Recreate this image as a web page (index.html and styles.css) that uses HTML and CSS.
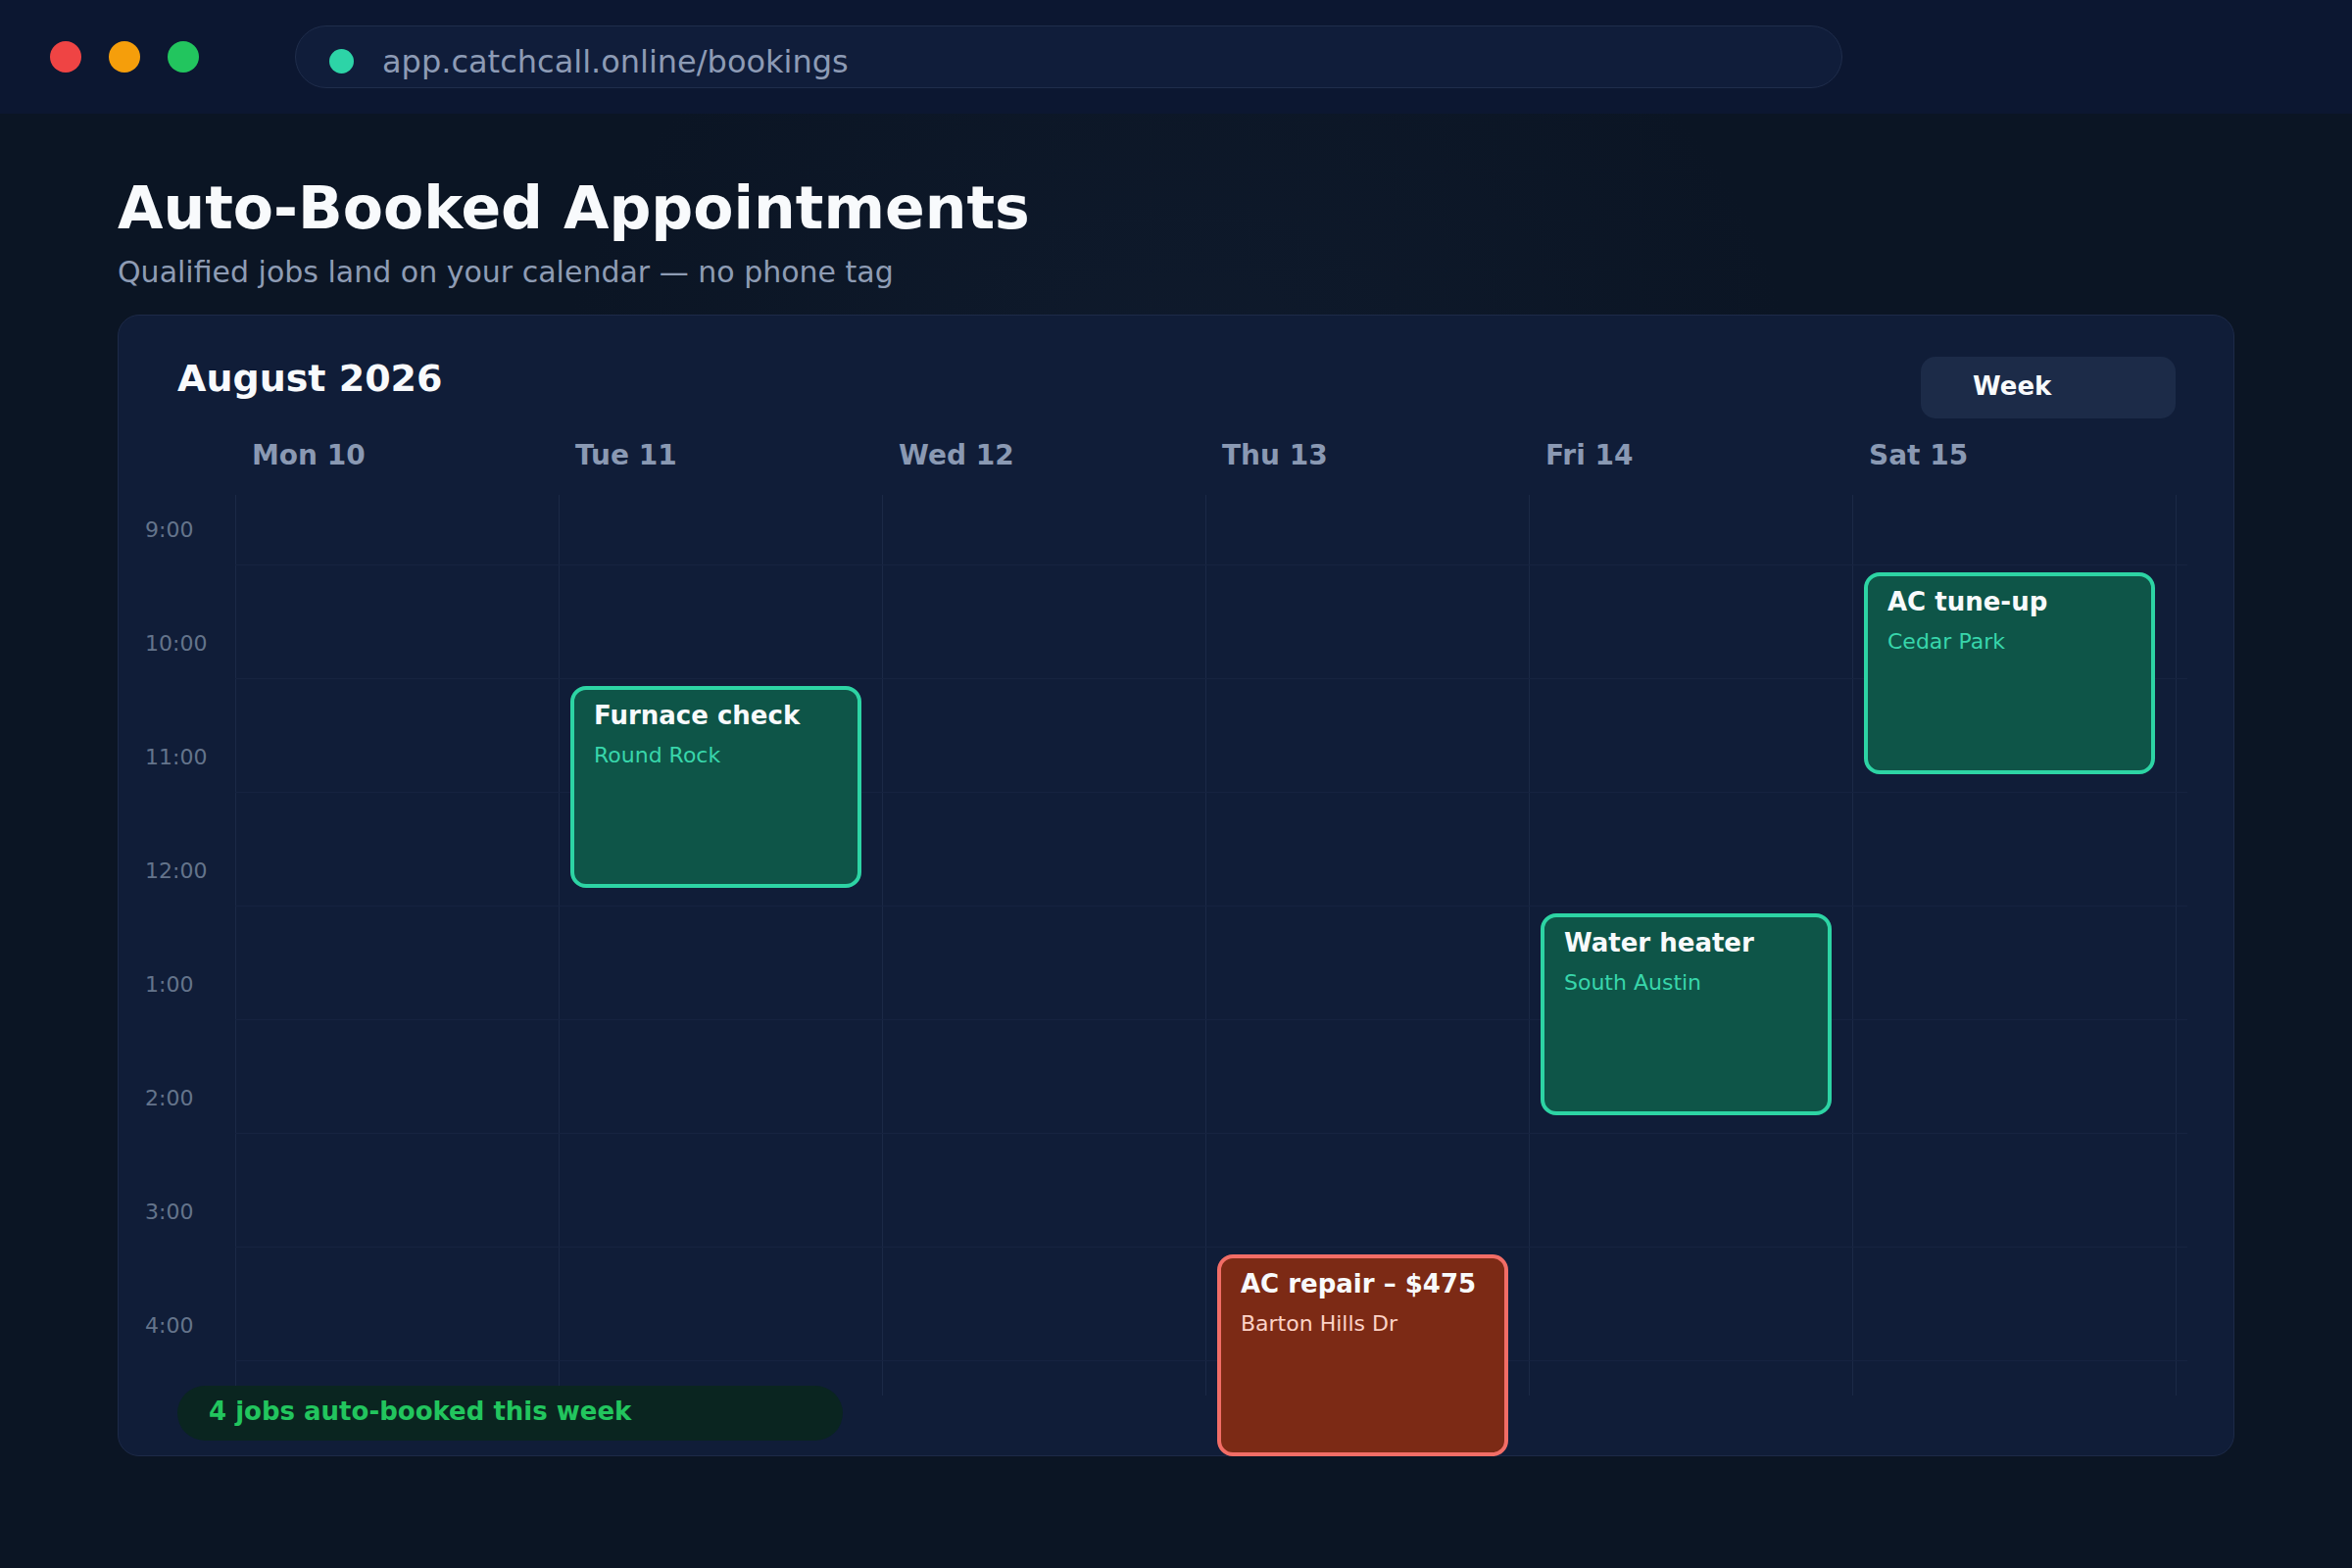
FILE: index.html
```html
<!DOCTYPE html>
<html lang="en">
<head>
<meta charset="utf-8">
<title>Auto-Booked Appointments</title>
<link rel="stylesheet" href="styles.css">
</head>
<body>
<header class="topbar">
  <div class="dots">
    <span class="dot red"></span>
    <span class="dot amber"></span>
    <span class="dot green"></span>
  </div>
  <div class="url">
    <span class="secure"></span>
    <span class="url-text">app.catchcall.online/bookings</span>
  </div>
</header>
<main class="page">
  <h1 class="title">Auto-Booked Appointments</h1>
  <p class="subtitle">Qualified jobs land on your calendar — no phone tag</p>
  <section class="card">
    <div class="card-head">
      <h2 class="month">August 2026</h2>
      <div class="view">Week</div>
    </div>
    <div class="days">
      <div class="day">Mon 10</div>
      <div class="day">Tue 11</div>
      <div class="day">Wed 12</div>
      <div class="day">Thu 13</div>
      <div class="day">Fri 14</div>
      <div class="day">Sat 15</div>
    </div>
    <div class="body">
      <div class="times">
        <div class="slot first">9:00</div>
        <div class="slot">10:00</div>
        <div class="slot">11:00</div>
        <div class="slot">12:00</div>
        <div class="slot">1:00</div>
        <div class="slot">2:00</div>
        <div class="slot">3:00</div>
        <div class="slot">4:00</div>
        <div class="slot last"></div>
      </div>
      <div class="grid">
        <div class="row first"></div>
        <div class="row"></div>
        <div class="row"></div>
        <div class="row"></div>
        <div class="row"></div>
        <div class="row"></div>
        <div class="row"></div>
        <div class="row"></div>
        <div class="row last"></div>

        <div class="event teal" style="--day:1;--slot:1">
          <div class="ev-title">Furnace check</div>
          <div class="ev-sub">Round Rock</div>
        </div>
        <div class="event teal" style="--day:5;--slot:0">
          <div class="ev-title">AC tune-up</div>
          <div class="ev-sub">Cedar Park</div>
        </div>
        <div class="event teal" style="--day:4;--slot:3">
          <div class="ev-title">Water heater</div>
          <div class="ev-sub">South Austin</div>
        </div>
        <div class="event rust" style="--day:3;--slot:6">
          <div class="ev-title">AC repair – $475</div>
          <div class="ev-sub">Barton Hills Dr</div>
        </div>
      </div>
    </div>
    <div class="summary">4 jobs auto-booked this week</div>
  </section>
</main>
</body>
</html>
```

FILE: styles.css
```css
* {
  box-sizing: border-box;
}

html, body {
  margin: 0;
  padding: 0;
}

body {
  width: 2400px;
  height: 1600px;
  overflow: hidden;
  font-family: "DejaVu Sans", "Noto Sans", sans-serif;
  color: #f8fafc;
  background-color: #0b1524;
  background-image: radial-gradient(ellipse 900px 700px at 50% 25%, rgba(22, 36, 60, 0.35), rgba(11, 21, 36, 0) 70%);
}

/* ---------- browser top bar ---------- */
.topbar {
  height: 116px;
  background: #0c1731;
  display: flex;
  align-items: center;
  padding-left: 51px;
}

.dots {
  display: flex;
  gap: 28px;
}

.dot {
  width: 32px;
  height: 32px;
  border-radius: 50%;
  display: block;
}

.dot.red { background: #ef4444; }
.dot.amber { background: #f59e0b; }
.dot.green { background: #22c55e; }

.url {
  margin-left: 98px;
  width: 1579px;
  height: 64px;
  border-radius: 32px;
  background: #101d3a;
  border: 1.5px solid #1f2d4b;
  display: flex;
  align-items: center;
  padding-left: 34px;
  padding-top: 9px;
}

.secure {
  width: 25px;
  height: 25px;
  border-radius: 50%;
  background: #2dd4a7;
  display: block;
}

.url-text {
  margin-left: 29px;
  font-size: 32px;
  color: #8d9bb5;
  line-height: 40px;
}

/* ---------- page heading ---------- */
.page {
  padding: 60px 120px 0 120px;
}

.title {
  margin: 0;
  font-size: 60px;
  line-height: 72px;
  font-weight: bold;
  color: #f8fafc;
}

.subtitle {
  margin: 12px 0 0 0;
  font-size: 30px;
  line-height: 36px;
  color: #8e9cb4;
}

/* ---------- calendar card ---------- */
.card {
  position: relative;
  margin-top: 25px;
  width: 2160px;
  background: #101d38;
  border: 1px solid #1d2a48;
  border-radius: 22px;
  padding-bottom: 15px;
}

.card-head {
  display: flex;
  justify-content: space-between;
  align-items: flex-start;
  padding: 41px 59px 0 60px;
}

.month {
  margin: 0;
  font-size: 38px;
  line-height: 46px;
  font-weight: bold;
  color: #f8fafc;
}

.view {
  margin-top: 1px;
  width: 260px;
  height: 63px;
  border-radius: 15px;
  background: #1c2b48;
  display: flex;
  align-items: center;
  padding-left: 53px;
  padding-bottom: 3px;
  font-size: 26px;
  font-weight: bold;
  color: #f8fafc;
}

.days {
  display: flex;
  margin-top: 21px;
  padding-left: 119px;
}

.day {
  width: 330px;
  padding-left: 17px;
  font-size: 28px;
  line-height: 34px;
  font-weight: bold;
  color: #8a99b3;
}

.body {
  display: flex;
  margin-top: 23px;
}

.times {
  width: 119px;
  padding-left: 27px;
}

.slot {
  height: 116px;
  display: flex;
  align-items: flex-end;
  padding-bottom: 25px;
  font-size: 22px;
  line-height: 22px;
  color: #64748b;
}

.slot.first { height: 72px; }
.slot.last { height: 35px; padding-bottom: 0; }

.grid {
  position: relative;
  width: 1992px;
  height: 919px;
  background-image: repeating-linear-gradient(to right, #1b2946 0, #1b2946 1px, transparent 1px, transparent 330px);
  background-size: 1981px 100%;
  background-repeat: no-repeat;
}

.row {
  height: 116px;
  border-bottom: 1px solid #162340;
}

.row.first { height: 72px; }
.row.last { height: 35px; border-bottom: none; }

/* ---------- events ---------- */
.event {
  position: absolute;
  left: calc(var(--day) * 330px + 12px);
  top: calc(var(--slot) * 116px + 79px);
  width: 297px;
  height: 206px;
  border: 4px solid;
  border-radius: 16px;
  padding: 11px 16px 0 20px;
  z-index: 2;
}

.event.teal {
  background: #0e5548;
  border-color: #2dd4a4;
}

.event.rust {
  background: #7c2a15;
  border-color: #f26d66;
}

.ev-title {
  font-size: 26px;
  line-height: 30px;
  font-weight: bold;
  color: #f8fafc;
  white-space: nowrap;
}

.ev-sub {
  margin-top: 13px;
  font-size: 22px;
  line-height: 26px;
  white-space: nowrap;
}

.event.teal .ev-sub { color: #38d6ab; }
.event.rust .ev-sub { color: #fdd2c6; }

/* ---------- summary pill ---------- */
.summary {
  position: relative;
  z-index: 1;
  margin: -10px 0 0 60px;
  width: 679px;
  height: 56px;
  border-radius: 28px;
  background: #0a2520;
  padding-left: 32px;
  font-size: 26px;
  line-height: 52px;
  font-weight: bold;
  color: #22c55e;
}
```
